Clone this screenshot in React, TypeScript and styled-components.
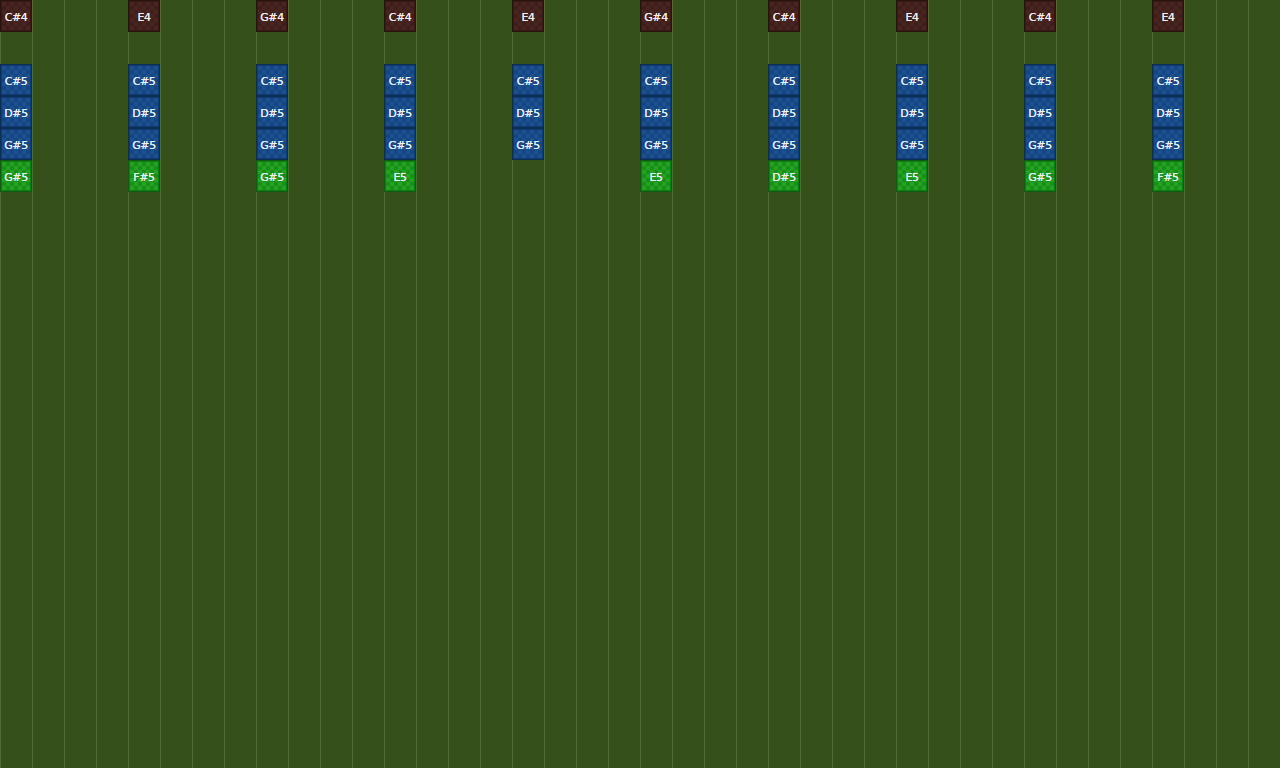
import React from "react";
import styled, { createGlobalStyle, css } from "styled-components";

const GlobalStyle = createGlobalStyle`
  html, body {
    margin: 0;
    padding: 0;
    background: #35501a;
    overflow: hidden;
  }
`;

type Kind = "lead" | "chord" | "melody";

const palette: Record<Kind, { edge: string; rim: string; a: string; b: string }> = {
  lead: { edge: "#2b1310", rim: "#361916", a: "#4a2520", b: "#3e1f1b" },
  chord: { edge: "#0c2f5a", rim: "#113b6e", a: "#1b5190", b: "#164681" },
  melody: { edge: "#0d5e0e", rim: "#127a16", a: "#22a322", b: "#1a8e1a" },
};

const Board = styled.div`
  display: grid;
  grid-template-columns: repeat(40, 32px);
  grid-auto-rows: 32px;
  width: 1280px;
  height: 768px;
  background-color: #35501a;
  background-image: linear-gradient(
    to right,
    #4f6e36 0,
    #4f6e36 1px,
    transparent 1px,
    transparent 32px
  );
  background-size: 32px 100%;
  font-family: "DejaVu Sans", "Liberation Sans", sans-serif;
`;

const Note = styled.div<{ $kind: Kind; $col: number; $row: number }>`
  grid-column: ${(p) => p.$col};
  grid-row: ${(p) => p.$row};
  display: flex;
  align-items: center;
  justify-content: center;
  box-sizing: border-box;
  width: 32px;
  height: 32px;
  padding-top: 2px;
  font-size: 11px;
  letter-spacing: -0.4px;
  color: #eef0f2;
  text-shadow: 0 0 0.4px #eef0f2;
  ${(p) => {
    const c = palette[p.$kind];
    return css`
      border: 1px solid ${c.edge};
      box-shadow: inset 0 0 0 1px ${c.rim};
      background-color: ${c.a};
      background-image: conic-gradient(
        ${c.b} 0 25%,
        transparent 0 50%,
        ${c.b} 0 75%,
        transparent 0
      );
      background-size: 8px 8px;
      background-position: 1px 1px;
    `;
  }}
`;

const leads = ["C#4", "E4", "G#4", "C#4", "E4", "G#4", "C#4", "E4", "C#4", "E4"];
const chords = ["C#5", "D#5", "G#5"];
const melody = ["G#5", "F#5", "G#5", "E5", null, "E5", "D#5", "E5", "G#5", "F#5"];

export default function App() {
  return (
    <>
      <GlobalStyle />
      <Board>
        {leads.map((name, i) => {
          const col = i * 4 + 1;
          return (
            <React.Fragment key={i}>
              <Note $kind="lead" $col={col} $row={1}>
                {name}
              </Note>
              {chords.map((c, j) => (
                <Note key={c} $kind="chord" $col={col} $row={3 + j}>
                  {c}
                </Note>
              ))}
              {melody[i] && (
                <Note $kind="melody" $col={col} $row={6}>
                  {melody[i]}
                </Note>
              )}
            </React.Fragment>
          );
        })}
      </Board>
    </>
  );
}
